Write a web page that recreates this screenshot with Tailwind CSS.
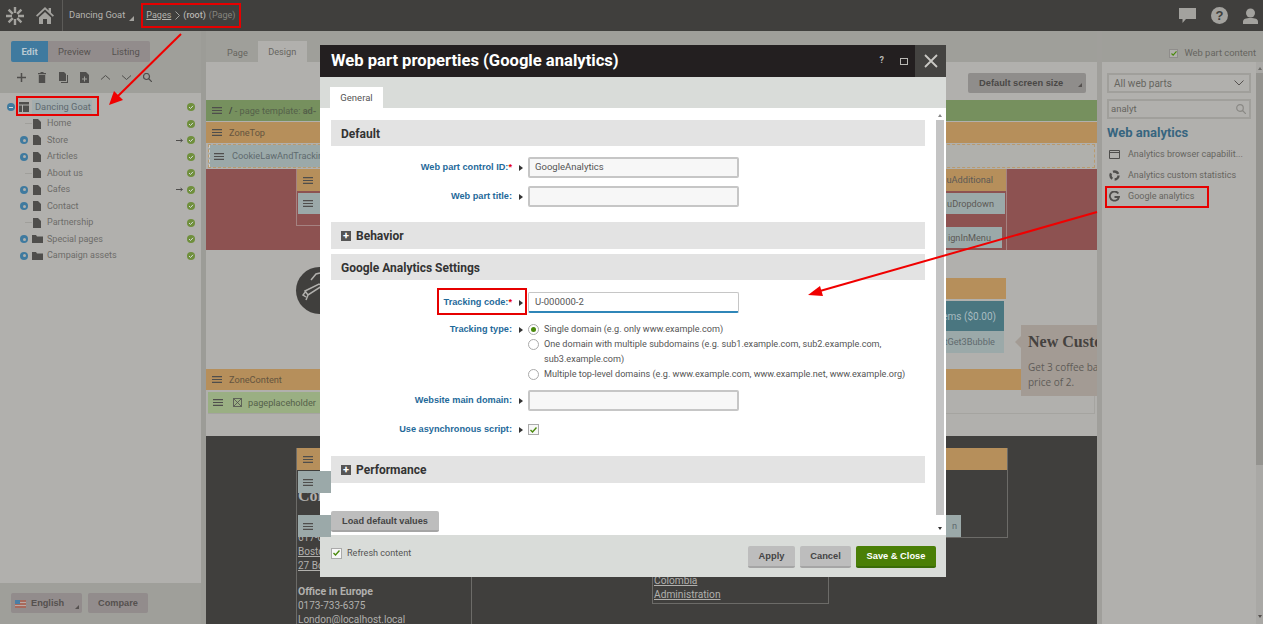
<!DOCTYPE html>
<html lang="en">
<head>
    <meta charset="UTF-8">
    <title>Web part properties</title>
    <script src="https://cdn.jsdelivr.net/npm/@tailwindcss/browser@4"></script>
</head>
<body class="bg-[#9f9f9a]">
<div class="relative w-[1263px] h-[624px] overflow-hidden font-['Roboto',sans-serif] text-[#4f4e4c] text-[9.200px]">

    <!-- Top bar -->
    <header class="h-[31px] bg-[#403f3d] flex items-center text-[#b5b4b0] text-[9px]">
        <svg class="ml-[5px] w-[20px] h-[20px]" viewBox="0 0 20 20" fill="none" stroke="#a3a29e" stroke-width="2.400"><path d="M10 1v6M10 13v6M1 10h6M13 10h6M3.600 3.600l4.200 4.200M12.200 12.200l4.200 4.200M16.400 3.600l-4.200 4.200M7.800 12.200l-4.200 4.200"/></svg>
        <svg class="ml-[11px] w-[18px] h-[17px]" viewBox="0 0 18 17" fill="#a3a29e"><path d="M9 0L0 8.500l1.200 1.200L9 2.600l7.800 7.100L18 8.500l-3-2.800V1h-2.400v2.500z"/><path d="M3 10.500L9 5l6 5.500V17h-4v-5H7v5H3z"/></svg>
        <div class="ml-[8px] w-px h-[31px] bg-[#5c5b58]"></div>
        <span class="ml-[6px] text-[9.400px]">Dancing Goat</span>
        <span class="ml-[4px] mt-[5px] w-0 h-0 border-l-[5px] border-l-transparent border-b-[5px] border-b-[#a3a29e]"></span>
        <span class="ml-[12px] underline">Pages</span>
        <svg class="ml-[4px] w-[5px] h-[9px]" viewBox="0 0 5 9" fill="none" stroke="#a3a29e"><path d="M.5.500l4 4-4 4"/></svg>
        <span class="ml-[3px] font-medium">(root)</span>
        <span class="ml-[3px] text-[#86857f]">(Page)</span>
        <div class="ml-auto flex items-center gap-[15px] pr-[5px]">
            <svg class="w-[17px] h-[15px]" viewBox="0 0 17 15" fill="#a3a29e"><path d="M0 0h17v11H7l-3.500 4v-4H0z"/></svg>
            <svg class="w-[17px] h-[17px]" viewBox="0 0 17 17"><circle cx="8.500" cy="8.500" r="8.500" fill="#a3a29e"/><text x="8.500" y="13" text-anchor="middle" font-size="13" font-weight="700" fill="#403f3d" font-family="Liberation Sans">?</text></svg>
            <svg class="w-[15px] h-[16px]" viewBox="0 0 15 16" fill="#a3a29e"><circle cx="7.500" cy="5" r="4.500"/><path d="M0 16v-2.500C0 11 3 10 7.500 10s7.500 1 7.500 3.500V16z"/></svg>
        </div>
    </header>

    <div class="flex h-[593px]">
        <!-- Left column -->
        <aside class="w-[201px] shrink-0 flex flex-col">
            <div class="h-[62px] pt-[10px] pl-[11px]">
                <div class="flex h-[21px] w-[139px] rounded-[2px] overflow-hidden text-[9.400px]">
                    <span class="w-[37px] pt-px bg-[#3f7a9f] text-[#b9c9d2] font-bold flex items-center justify-center">Edit</span>
                    <span class="flex-1 pt-px bg-[#928c8c] text-[#55514f] flex items-center pl-[10px] gap-[21px]"><span>Preview</span><span>Listing</span></span>
                </div>
                <div class="flex items-center mt-[10px] ml-[6px] h-[11px]">
                    <svg class="w-[9px] h-[9px]" viewBox="0 0 9 9" fill="none" stroke="#4f4e4c" stroke-width="1.500"><path d="M4.500 0v9M0 4.500h9"/></svg>
                    <svg class="ml-[12px] w-[8px] h-[11px]" viewBox="0 0 8 11" fill="#4f4e4c"><path d="M0 1h8v1.200H0zM2.500 0h3v1h-3zM.8 3h6.400v8H.8z"/></svg>
                    <svg class="ml-[13px] w-[9px] h-[11px]" viewBox="0 0 9 11" fill="#4f4e4c"><path d="M0 0h5l2 2v7H0z"/><path d="M8 3h1v8H2v-1h6z"/></svg>
                    <svg class="ml-[12px] w-[9px] h-[11px]" viewBox="0 0 9 11" fill="#4f4e4c"><path d="M0 0h6l3 3v8H0z"/><path d="M2 7h5M4.500 4.500v5" stroke="#9f9f9a"/></svg>
                    <svg class="ml-[12px] w-[9px] h-[5px]" viewBox="0 0 9 5" fill="none" stroke="#4f4e4c"><path d="M0 4.500l4.500-4 4.500 4"/></svg>
                    <svg class="ml-[12px] w-[9px] h-[5px]" viewBox="0 0 9 5" fill="none" stroke="#4f4e4c"><path d="M0 .5l4.500 4 4.500-4"/></svg>
                    <svg class="ml-[12px] w-[9px] h-[9px]" viewBox="0 0 9 9" fill="none" stroke="#4f4e4c" stroke-width="1.200"><circle cx="3.500" cy="3.500" r="3"/><path d="M5.500 5.500L9 9"/></svg>
                </div>
            </div>
            <!-- Tree -->
            <div class="h-[490px] bg-[#b1b0ad] pt-[6px] text-[9px] text-[#6d6c69]">
                <div class="flex items-center h-[16.500px] pl-[7px] pr-[6px]">
                    <span class="w-[8px] h-[8px] rounded-full bg-[#3f7a9f] flex items-center justify-center"><span class="w-[4px] h-px bg-[#d5dadc]"></span></span>
                    <svg class="ml-[4px] w-[10px] h-[10px]" viewBox="0 0 10 10" fill="#4f4e4c"><path d="M0 0h10v2.500H0zM0 3.500h3V10H0zM4 3.500h6V10H4z"/></svg>
                    <span class="ml-[3px] w-[60px] pl-[3px] bg-[#a3adae] text-[#5f6a6e] text-[9.300px]">Dancing Goat</span>
                    <svg class="ml-auto w-[8px] h-[8px]" viewBox="0 0 8 8"><circle cx="4" cy="4" r="4" fill="#6f8f3c"/><path d="M2 4l1.500 1.500L6 2.800" fill="none" stroke="#d5dadc"/></svg>
                </div>
                <div class="flex items-center h-[16.500px] pl-[25px] pr-[6px]">
                    <span class="w-[7px] h-px bg-[#a09f9b] mr-px"></span>
                    <svg class="w-[8px] h-[10px]" viewBox="0 0 8 10" fill="#4f4e4c"><path d="M0 0h5l3 3v7H0z"/></svg>
                    <span class="ml-[6px]">Home</span>
                    <svg class="ml-auto w-[8px] h-[8px]" viewBox="0 0 8 8"><circle cx="4" cy="4" r="4" fill="#6f8f3c"/><path d="M2 4l1.500 1.500L6 2.800" fill="none" stroke="#d5dadc"/></svg>
                </div>
                <div class="flex items-center h-[16.500px] pl-[20px] pr-[6px]">
                    <span class="w-[8px] h-[8px] rounded-full bg-[#3f7a9f] mr-[5px] flex items-center justify-center"><span class="w-[3px] h-[3px] rounded-full bg-[#b1b0ad]"></span></span>
                    <svg class="w-[8px] h-[10px]" viewBox="0 0 8 10" fill="#4f4e4c"><path d="M0 0h5l3 3v7H0z"/></svg>
                    <span class="ml-[6px]">Store</span>
                    <svg class="ml-auto mr-[4px] w-[7px] h-[5px]" viewBox="0 0 7 5" fill="none" stroke="#4f4e4c"><path d="M0 2.500h6M4.500 1L6.500 2.500 4.500 4"/></svg>
                    <svg class="w-[8px] h-[8px]" viewBox="0 0 8 8"><circle cx="4" cy="4" r="4" fill="#6f8f3c"/><path d="M2 4l1.500 1.500L6 2.800" fill="none" stroke="#d5dadc"/></svg>
                </div>
                <div class="flex items-center h-[16.500px] pl-[20px] pr-[6px]">
                    <span class="w-[8px] h-[8px] rounded-full bg-[#3f7a9f] mr-[5px] flex items-center justify-center"><span class="w-[3px] h-[3px] rounded-full bg-[#b1b0ad]"></span></span>
                    <svg class="w-[8px] h-[10px]" viewBox="0 0 8 10" fill="#4f4e4c"><path d="M0 0h5l3 3v7H0z"/></svg>
                    <span class="ml-[6px]">Articles</span>
                    <svg class="ml-auto w-[8px] h-[8px]" viewBox="0 0 8 8"><circle cx="4" cy="4" r="4" fill="#6f8f3c"/><path d="M2 4l1.500 1.500L6 2.800" fill="none" stroke="#d5dadc"/></svg>
                </div>
                <div class="flex items-center h-[16.500px] pl-[25px] pr-[6px]">
                    <span class="w-[7px] h-px bg-[#a09f9b] mr-px"></span>
                    <svg class="w-[8px] h-[10px]" viewBox="0 0 8 10" fill="#4f4e4c"><path d="M0 0h5l3 3v7H0z"/></svg>
                    <span class="ml-[6px]">About us</span>
                    <svg class="ml-auto w-[8px] h-[8px]" viewBox="0 0 8 8"><circle cx="4" cy="4" r="4" fill="#6f8f3c"/><path d="M2 4l1.500 1.500L6 2.800" fill="none" stroke="#d5dadc"/></svg>
                </div>
                <div class="flex items-center h-[16.500px] pl-[20px] pr-[6px]">
                    <span class="w-[8px] h-[8px] rounded-full bg-[#3f7a9f] mr-[5px] flex items-center justify-center"><span class="w-[3px] h-[3px] rounded-full bg-[#b1b0ad]"></span></span>
                    <svg class="w-[8px] h-[10px]" viewBox="0 0 8 10" fill="#4f4e4c"><path d="M0 0h5l3 3v7H0z"/></svg>
                    <span class="ml-[6px]">Cafes</span>
                    <svg class="ml-auto mr-[4px] w-[7px] h-[5px]" viewBox="0 0 7 5" fill="none" stroke="#4f4e4c"><path d="M0 2.500h6M4.500 1L6.500 2.500 4.500 4"/></svg>
                    <svg class="w-[8px] h-[8px]" viewBox="0 0 8 8"><circle cx="4" cy="4" r="4" fill="#6f8f3c"/><path d="M2 4l1.500 1.500L6 2.800" fill="none" stroke="#d5dadc"/></svg>
                </div>
                <div class="flex items-center h-[16.500px] pl-[20px] pr-[6px]">
                    <span class="w-[8px] h-[8px] rounded-full bg-[#3f7a9f] mr-[5px] flex items-center justify-center"><span class="w-[3px] h-[3px] rounded-full bg-[#b1b0ad]"></span></span>
                    <svg class="w-[8px] h-[10px]" viewBox="0 0 8 10" fill="#4f4e4c"><path d="M0 0h5l3 3v7H0z"/></svg>
                    <span class="ml-[6px]">Contact</span>
                    <svg class="ml-auto w-[8px] h-[8px]" viewBox="0 0 8 8"><circle cx="4" cy="4" r="4" fill="#6f8f3c"/><path d="M2 4l1.500 1.500L6 2.800" fill="none" stroke="#d5dadc"/></svg>
                </div>
                <div class="flex items-center h-[16.500px] pl-[25px] pr-[6px]">
                    <span class="w-[7px] h-px bg-[#a09f9b] mr-px"></span>
                    <svg class="w-[8px] h-[10px]" viewBox="0 0 8 10" fill="#4f4e4c"><path d="M0 0h5l3 3v7H0z"/></svg>
                    <span class="ml-[6px]">Partnership</span>
                    <svg class="ml-auto w-[8px] h-[8px]" viewBox="0 0 8 8"><circle cx="4" cy="4" r="4" fill="#6f8f3c"/><path d="M2 4l1.500 1.500L6 2.800" fill="none" stroke="#d5dadc"/></svg>
                </div>
                <div class="flex items-center h-[16.500px] pl-[20px] pr-[6px]">
                    <span class="w-[8px] h-[8px] rounded-full bg-[#3f7a9f] mr-[4px] flex items-center justify-center"><span class="w-[3px] h-[3px] rounded-full bg-[#b1b0ad]"></span></span>
                    <svg class="w-[11px] h-[8px]" viewBox="0 0 11 8" fill="#4f4e4c"><path d="M0 0h4l1 1.500h6V8H0z"/></svg>
                    <span class="ml-[4px]">Special pages</span>
                    <svg class="ml-auto w-[8px] h-[8px]" viewBox="0 0 8 8"><circle cx="4" cy="4" r="4" fill="#6f8f3c"/><path d="M2 4l1.500 1.500L6 2.800" fill="none" stroke="#d5dadc"/></svg>
                </div>
                <div class="flex items-center h-[16.500px] pl-[20px] pr-[6px]">
                    <span class="w-[8px] h-[8px] rounded-full bg-[#3f7a9f] mr-[4px] flex items-center justify-center"><span class="w-[3px] h-[3px] rounded-full bg-[#b1b0ad]"></span></span>
                    <svg class="w-[11px] h-[8px]" viewBox="0 0 11 8" fill="#4f4e4c"><path d="M0 0h4l1 1.500h6V8H0z"/></svg>
                    <span class="ml-[4px]">Campaign assets</span>
                    <svg class="ml-auto w-[8px] h-[8px]" viewBox="0 0 8 8"><circle cx="4" cy="4" r="4" fill="#6f8f3c"/><path d="M2 4l1.500 1.500L6 2.800" fill="none" stroke="#d5dadc"/></svg>
                </div>
            </div>
            <div class="flex-1 flex items-start pt-[10px] pl-[11px] gap-[6px] font-['Liberation_Sans',sans-serif] font-bold text-[#55514f] text-[9.200px]">
                <span class="relative w-[71px] h-[20px] pt-px bg-[#928c8c] rounded-[2px] flex items-center pl-[4px]">
                    <svg class="w-[11px] h-[8px] mr-[5px]" viewBox="0 0 11 8"><path d="M0 0h11v8H0z" fill="#a86a5c"/><path d="M0 0h5v4H0z" fill="#4a7ea5"/><path d="M5 2.500h6M0 5.500h11" stroke="#b9a9a5"/></svg>English
                    <span class="absolute right-[3px] bottom-[4px] w-0 h-0 border-l-[4px] border-l-transparent border-b-[4px] border-b-[#55514f]"></span>
                </span>
                <span class="w-[60px] h-[20px] pt-px bg-[#928c8c] rounded-[2px] flex items-center justify-center">Compare</span>
            </div>
        </aside>

        <div class="w-[5px] bg-[#9c9c97]"></div>

        <!-- Design area -->
        <main class="relative w-[891px] shrink-0">
            <div class="h-[31px] pl-[21px] pt-[10px] flex text-[9.200px] text-[#66655f]">
                <span class="mt-[5px]">Page</span>
                <span class="ml-[10px] w-[49px] h-[21px] pt-px bg-[#b1b0ad] flex items-center justify-center">Design</span>
            </div>
            <div class="h-[562px] bg-[#b1b0ad]">
                <div class="h-[38px] flex items-start justify-end pr-[11px] pt-[11px]">
                    <span class="relative w-[118px] h-[20px] pt-px bg-[#8f8d8b] rounded-[2px] flex items-center pl-[11px] font-['Liberation_Sans',sans-serif] font-bold text-[#4a4846] text-[9.300px]">Default screen size
                        <span class="absolute right-[4px] bottom-[6px] w-0 h-0 border-l-[4px] border-l-transparent border-b-[4px] border-b-[#55514f]"></span>
                    </span>
                </div>
                <div class="h-[21px] bg-[#76905e] flex items-center pl-[6px] gap-[7px] text-[#55614a]">
                    <svg class="w-[10px] h-[7px]" viewBox="0 0 10 7" fill="#4f4e4c"><path d="M0 0h10v1.200H0zM0 2.900h10v1.200H0zM0 5.800h10V7H0z"/></svg>
                    <span><b class="text-[#44463e]">/</b> - page template: <b>ad-</b></span>
                </div>
                <div class="mt-px h-[21px] bg-[#b68f5b] flex items-center pl-[6px] gap-[7px] text-[#65553f]">
                    <svg class="w-[10px] h-[7px]" viewBox="0 0 10 7" fill="#4f4e4c"><path d="M0 0h10v1.200H0zM0 2.900h10v1.200H0zM0 5.800h10V7H0z"/></svg>ZoneTop
                </div>
                <div class="mt-[1px] mx-[2px] h-[24px] border border-dashed border-[#b99a6d] bg-[#b0b0ac] flex items-center text-[#5f6a6e]">
                    <div class="w-[135px] h-full bg-[#9ba9a9] border-l border-dashed border-[#d0d0cc] flex items-center pl-[4px] gap-[8px] whitespace-nowrap">
                        <svg class="w-[10px] h-[7px] shrink-0" viewBox="0 0 10 7" fill="#4f4e4c"><path d="M0 0h10v1.200H0zM0 2.900h10v1.200H0zM0 5.800h10V7H0z"/></svg>CookieLawAndTracking
                    </div>
                </div>
                <div class="mt-[1px] h-[81px] bg-[#8d5251] flex justify-between pl-[90px] pr-[90px] text-[#5d5a56]">
                    <div class="w-[60px] h-[57px] border border-[#a58281] border-t-0">
                        <div class="h-[22px] bg-[#b68f5b] flex items-center pl-[6px]"><svg class="w-[10px] h-[7px]" viewBox="0 0 10 7" fill="#4f4e4c"><path d="M0 0h10v1.200H0zM0 2.900h10v1.200H0zM0 5.800h10V7H0z"/></svg></div>
                        <div class="mt-[2px] mx-[1px] h-[21px] bg-[#9ba9a9] flex items-center pl-[5px]"><svg class="w-[10px] h-[7px]" viewBox="0 0 10 7" fill="#4f4e4c"><path d="M0 0h10v1.200H0zM0 2.900h10v1.200H0zM0 5.800h10V7H0z"/></svg></div>
                    </div>
                    <div class="w-[67px] h-[81px] flex flex-col border-r border-[#a58281] whitespace-nowrap">
                        <div class="h-[22px] bg-[#b68f5b] flex items-center justify-end pr-[13px]">uAdditional</div>
                        <div class="mt-[2px] w-[65px] h-[21px] bg-[#9ba9a9] flex items-center justify-end pr-[11px]">uDropdown</div>
                        <div class="mt-[13px] w-[62px] h-[21px] bg-[#9ba9a9] flex items-center justify-end pr-[11px]">ignInMenu</div>
                    </div>
                </div>
                <div class="h-[119px] flex justify-between pl-[90px] pr-[91px]">
                    <div class="mt-[17px] w-[47px] h-[47px] rounded-full bg-[#403f3d]">
                        <svg class="w-[47px] h-[47px]" viewBox="0 0 47 47" fill="none" stroke="#b1b0ad" stroke-width="1.500"><path d="M15 13l5-6 4-1M9 24l14-7 3 2-14 9zM10 24l-3 4 3 2M12 28l-2 5"/></svg>
                    </div>
                    <div class="mt-[28px] w-[60px]">
                        <div class="h-[21px] bg-[#b68f5b]"></div>
                        <div class="mt-[2px] mr-[2px] h-[30px] bg-[#4a7680] flex items-center justify-end pr-[8px] text-[#a9bcc0] text-[10px] whitespace-nowrap">ems ($0.00)</div>
                        <div class="mr-[2px] h-[22px] bg-[#9ba9a9] flex items-center justify-end pr-[9px] text-[#5f6a6e] whitespace-nowrap">tGet3Bubble</div>
                    </div>
                </div>
                <div class="h-[21px] bg-[#b68f5b] flex items-center pl-[6px] gap-[7px] text-[#65553f]">
                    <svg class="w-[10px] h-[7px]" viewBox="0 0 10 7" fill="#4f4e4c"><path d="M0 0h10v1.200H0zM0 2.900h10v1.200H0zM0 5.800h10V7H0z"/></svg>ZoneContent
                </div>
                <div class="mt-[2px] ml-[2px] h-[22px] border-r border-b border-[#a5a4a0] mr-[2px]">
                    <div class="w-[125px] h-[21px] bg-[#9aaf83] flex items-center pl-[5px] text-[#55614a] whitespace-nowrap">
                        <svg class="w-[10px] h-[7px] mr-[10px] shrink-0" viewBox="0 0 10 7" fill="#4f4e4c"><path d="M0 0h10v1.200H0zM0 2.900h10v1.200H0zM0 5.800h10V7H0z"/></svg>
                        <svg class="w-[9px] h-[9px] mr-[6px] shrink-0" viewBox="0 0 9 9" fill="none" stroke="#4f4e4c" stroke-width=".8"><path d="M.5.5h8v8h-8zM.5.5l8 8M8.500.5l-8 8"/></svg>pageplaceholder
                    </div>
                </div>
                <!-- Footer of the edited page -->
                <div class="mt-[22px] h-[188px] bg-[#403f3d] flex pl-[90px] pt-[12px] text-[#b1b0ad]">
                    <div class="w-[176px] h-[176px] border-l border-r border-[#6c6b68]">
                        <div class="h-[22px] w-[35px] bg-[#b68f5b] flex items-center pl-[6px]"><svg class="w-[10px] h-[7px]" viewBox="0 0 10 7" fill="#4f4e4c"><path d="M0 0h10v1.200H0zM0 2.900h10v1.200H0zM0 5.800h10V7H0z"/></svg></div>
                        <div class="relative z-10 mt-px ml-[1px] h-[22px] w-[33px] bg-[#9ba9a9] flex items-center pl-[5px]"><svg class="w-[10px] h-[7px]" viewBox="0 0 10 7" fill="#4f4e4c"><path d="M0 0h10v1.200H0zM0 2.900h10v1.200H0zM0 5.800h10V7H0z"/></svg></div>
                        <div class="-mt-[8px] pl-px font-['Liberation_Serif',serif] font-bold text-[16px] leading-[22px]">Con</div>
                        <div class="relative z-10 mt-[8px] ml-[1px] h-[22px] w-[33px] bg-[#9ba9a9] flex items-center pl-[5px]"><svg class="w-[10px] h-[7px]" viewBox="0 0 10 7" fill="#4f4e4c"><path d="M0 0h10v1.200H0zM0 2.900h10v1.200H0zM0 5.800h10V7H0z"/></svg></div>
                        <div class="-mt-[6px] pl-px text-[10px] leading-[14px]">617-000-0000<br><u>Boston</u><br><u>27 Boylston</u></div>
                        <div class="pl-px mt-[12px] text-[10px] leading-[14px] whitespace-nowrap"><b class="text-[10.500px]">Office in Europe</b><br>0173-733-6375<br>London@localhost.local</div>
                    </div>
                    <div class="ml-[180px] -mt-[12px] pt-[138px] w-[177px] h-[168px] border-l border-r border-b border-[#6c6b68] pl-px text-[10.200px] leading-[14px]">
                        <u>Colombia</u><br><u>Administration</u>
                    </div>
                    <div class="ml-[59px] w-[120px] h-[90px] border-r border-b border-[#6c6b68] flex flex-col">
                        <div class="h-[22px] bg-[#b68f5b]"></div>
                        <div class="mt-[45px] w-[73px] h-[22px] bg-[#9ba9a9] flex items-center justify-end pr-[4px] text-[#5f6a6e]">n</div>
                    </div>
                </div>
            </div>
            <!-- Promo bubble overlapping the zones -->
            <div class="absolute left-[815px] top-[294px] w-[76px] h-[71px] bg-[#a39b94] overflow-hidden pl-[7px] pt-[7px] text-[#5f5c58] font-['Open_Sans',sans-serif] text-[10px] leading-[14.500px] whitespace-nowrap">
                <div class="font-['Liberation_Serif',serif] font-bold text-[16px] leading-[20px] mb-[8px] text-[#45423f]">New Customers</div>
                Get 3 coffee bags<br>price of 2.
            </div>
            <span class="absolute left-[809px] top-[305px] w-0 h-0 border-y-[6px] border-y-transparent border-r-[6px] border-r-[#a39b94]"></span>
        </main>

        <!-- Right column -->
        <div class="w-[5px] bg-[#a09f9b]"></div>
        <aside class="w-[161px] shrink-0 flex flex-col">
            <div class="h-[31px] flex items-center justify-end pr-[7px] pt-[13px] text-[#66655f] text-[9.400px]">
                <span class="w-[9px] h-[9px] mr-[6px] bg-[#b1b0ad] border border-[#8f8d8b] flex items-center justify-center">
                    <svg class="w-[6px] h-[5px]" viewBox="0 0 7 6" fill="none" stroke="#4a8a0c" stroke-width="1.400"><path d="M.5 3l2 2L6.500.5"/></svg>
                </span>Web part content
            </div>
            <div class="flex-1 flex">
                <div class="w-[154px] bg-[#b1b0ad] px-[5px] pt-[11px] text-[9px] text-[#66655f]">
                    <div class="h-[20px] border-2 border-[#a09f9b] flex items-center justify-between px-[5px] text-[10px]">All web parts
                        <svg class="w-[10px] h-[6px]" viewBox="0 0 10 6" fill="none" stroke="#55514f"><path d="M.5.5L5 5 9.500.5"/></svg>
                    </div>
                    <div class="mt-[6px] h-[20px] border-2 border-[#a09f9b] flex items-center justify-between pl-[2px] pr-[3px] text-[9.500px]">analyt
                        <svg class="w-[10px] h-[10px]" viewBox="0 0 10 10" fill="none" stroke="#8a8985" stroke-width="1.200"><circle cx="4" cy="4" r="3.300"/><path d="M6.500 6.500L10 10"/></svg>
                    </div>
                    <h2 class="mt-[6px] text-[13px] leading-[16px] font-bold text-[#37657f]">Web analytics</h2>
                    <div class="mt-[3px] h-[21px] flex items-center gap-[8px] pl-[2px] whitespace-nowrap">
                        <svg class="w-[11px] h-[9px] shrink-0" viewBox="0 0 11 9" fill="none" stroke="#4f4e4c"><path d="M.5.5h10v8H.5zM.5 2.500h10"/></svg>Analytics browser capabilit...
                    </div>
                    <div class="h-[21px] flex items-center gap-[8px] pl-[2px] whitespace-nowrap">
                        <svg class="w-[11px] h-[11px] shrink-0" viewBox="0 0 11 11" fill="none" stroke="#4f4e4c" stroke-width="2.400" stroke-dasharray="6 2.400"><circle cx="5.500" cy="5.500" r="4"/></svg>Analytics custom statistics
                    </div>
                    <div class="h-[21px] flex items-center gap-[8px] pl-[2px] whitespace-nowrap">
                        <svg class="w-[11px] h-[11px] shrink-0" viewBox="0 0 11 11" fill="none" stroke="#4f4e4c" stroke-width="1.800"><path d="M9.300 2.500A4.600 4.600 0 1 0 10 6H5.500"/></svg>Google analytics
                    </div>
                </div>
                <div class="w-[7px] flex flex-col items-center bg-[#a9a8a5]">
                    <span class="mt-[5px] mb-[3px] w-0 h-0 border-x-[2.500px] border-x-transparent border-b-[3px] border-b-[#6d6c69]"></span>
                    <div class="h-[392px] w-[7px] bg-[#94938f]"></div>
                    <span class="mt-[150px] w-0 h-0 border-x-[2.500px] border-x-transparent border-t-[3px] border-t-[#55514f]"></span>
                </div>
            </div>
        </aside>
    </div>

    <!-- Modal dialog -->
    <div class="absolute left-[320px] top-[45px] w-[626px] h-[532px] flex flex-col bg-white">
        <div class="h-[32px] bg-[#231f20] flex items-center pl-[11px] text-white">
            <h1 class="text-[16.600px] font-bold">Web part properties (Google analytics)</h1>
            <span class="ml-auto mr-[16px] text-[#b9b8b4] text-[9px] font-bold">?</span>
            <span class="mr-[7px] w-[8px] h-[7px] border border-[#b9b8b4]"></span>
            <span class="w-[31px] h-[32px] bg-[#444341] flex items-center justify-center">
                <svg class="w-[14px] h-[14px]" viewBox="0 0 14 14" fill="none" stroke="#c9c8c4" stroke-width="1.800"><path d="M1 1l12 12M13 1L1 13"/></svg>
            </span>
        </div>
        <div class="h-[31px] bg-[#d9dcd9] pl-[10px] pt-[10px] flex">
            <span class="w-[53px] h-[21px] pt-px bg-white flex items-center justify-center text-[9.500px] text-[#555]">General</span>
        </div>
        <div class="relative flex-1 min-h-0 pl-[11px] pr-[21px] pt-[12px] text-[#555] text-[9.100px]">
            <div class="h-[26px] pt-px bg-[#e3e3e3] flex items-center pl-[10px] text-[12px] font-bold text-[#333]">Default</div>
            <div class="mt-[11px] h-[21px] flex items-center">
                <label class="w-[181px] text-right text-[#1f6a9a] font-bold text-[9.200px] font-['Liberation_Sans',sans-serif]">Web part control ID:<span class="text-red-600">*</span></label>
                <span class="ml-[7px] w-0 h-0 border-y-[3.500px] border-y-transparent border-l-[4px] border-l-[#333]"></span>
                <span class="ml-[5px] w-[211px] h-[21px] border-2 border-[#c6c6c6] rounded-[2px] bg-[#f7f7f7] flex items-center pl-[5px] text-[9.500px]">GoogleAnalytics</span>
            </div>
            <div class="mt-[8px] h-[21px] flex items-center">
                <label class="w-[181px] text-right text-[#1f6a9a] font-bold text-[9.200px] font-['Liberation_Sans',sans-serif]">Web part title:</label>
                <span class="ml-[7px] w-0 h-0 border-y-[3.500px] border-y-transparent border-l-[4px] border-l-[#333]"></span>
                <span class="ml-[5px] w-[211px] h-[21px] border-2 border-[#c6c6c6] rounded-[2px] bg-[#f7f7f7]"></span>
            </div>
            <div class="mt-[15px] h-[27px] bg-[#e3e3e3] flex items-center pl-[10px] text-[12px] font-bold text-[#333]">
                <span class="mr-[5px] w-[10px] h-[10px] bg-[#555] text-white text-[11px] leading-[9px] text-center">+</span>Behavior
            </div>
            <div class="mt-[5px] h-[26px] pt-px bg-[#e3e3e3] flex items-center pl-[10px] text-[12px] font-bold text-[#333]">Google Analytics Settings</div>
            <div class="mt-[12px] h-[21px] flex items-center">
                <label class="w-[181px] text-right text-[#1f6a9a] font-bold text-[9.200px] font-['Liberation_Sans',sans-serif]">Tracking code:<span class="text-red-600">*</span></label>
                <span class="ml-[7px] w-0 h-0 border-y-[3.500px] border-y-transparent border-l-[4px] border-l-[#333]"></span>
                <span class="ml-[5px] w-[211px] h-[21px] border border-[#c6c6c6] border-b-2 border-b-[#2f86b8] rounded-[2px] flex items-center pl-[6px] text-[9.500px]">U-000000-2</span>
            </div>
            <div class="mt-[9px] flex items-start">
                <label class="w-[181px] text-right text-[#1f6a9a] font-bold text-[9.200px] font-['Liberation_Sans',sans-serif] leading-[15px]">Tracking type:</label>
                <span class="ml-[7px] mt-[5px] w-0 h-0 border-y-[3.500px] border-y-transparent border-l-[4px] border-l-[#333]"></span>
                <div class="ml-[5px] leading-[15px]">
                    <div class="flex items-center"><span class="mr-[5px] w-[11px] h-[11px] rounded-full border border-[#aaa] flex items-center justify-center shrink-0"><span class="w-[5px] h-[5px] rounded-full bg-[#4a8a0c]"></span></span>Single domain (e.g. only www.example.com)</div>
                    <div class="flex"><span class="mt-[2px] mr-[5px] w-[11px] h-[11px] rounded-full border border-[#aaa] shrink-0"></span><span class="w-[362px]">One domain with multiple subdomains (e.g. sub1.example.com, sub2.example.com, sub3.example.com)</span></div>
                    <div class="flex items-center whitespace-nowrap"><span class="mr-[5px] w-[11px] h-[11px] rounded-full border border-[#aaa] shrink-0"></span>Multiple top-level domains (e.g. www.example.com, www.example.net, www.example.org)</div>
                </div>
            </div>
            <div class="mt-[8px] h-[21px] flex items-center">
                <label class="w-[181px] text-right text-[#1f6a9a] font-bold text-[9.200px] font-['Liberation_Sans',sans-serif]">Website main domain:</label>
                <span class="ml-[7px] w-0 h-0 border-y-[3.500px] border-y-transparent border-l-[4px] border-l-[#333]"></span>
                <span class="ml-[5px] w-[211px] h-[21px] border-2 border-[#c6c6c6] rounded-[2px] bg-[#f7f7f7]"></span>
            </div>
            <div class="mt-[8px] h-[21px] flex items-center">
                <label class="w-[181px] text-right text-[#1f6a9a] font-bold text-[9.200px] font-['Liberation_Sans',sans-serif]">Use asynchronous script:</label>
                <span class="ml-[7px] w-0 h-0 border-y-[3.500px] border-y-transparent border-l-[4px] border-l-[#333]"></span>
                <span class="ml-[5px] w-[11px] h-[11px] border border-[#aaa] bg-[#f7f7f7] flex items-center justify-center">
                    <svg class="w-[7px] h-[6px]" viewBox="0 0 7 6" fill="none" stroke="#4a8a0c" stroke-width="1.400"><path d="M.5 3l2 2L6.500.5"/></svg>
                </span>
            </div>
            <div class="mt-[16px] h-[27px] bg-[#e3e3e3] flex items-center pl-[10px] text-[12px] font-bold text-[#333]">
                <span class="mr-[5px] w-[10px] h-[10px] bg-[#555] text-white text-[11px] leading-[9px] text-center">+</span>Performance
            </div>
            <div class="mt-[28px] w-[108px] h-[21px] pt-[2px] bg-[#bdbdbd] border-b-2 border-[#a5a5a5] rounded-[2px] flex items-center justify-center font-['Liberation_Sans',sans-serif] font-bold text-[9.200px] text-[#444]">Load default values</div>
            <!-- Dialog scrollbar -->
            <div class="absolute right-[2px] top-0 bottom-0 w-[8px] flex flex-col items-center">
                <span class="mt-[6px] mb-[3px] w-0 h-0 border-x-[2.500px] border-x-transparent border-b-[3px] border-b-[#888]"></span>
                <div class="h-[395px] bg-[#c4c4c4] w-[8px]"></div>
                <span class="mt-[12px] w-0 h-0 border-x-[2.500px] border-x-transparent border-t-[3px] border-t-[#333]"></span>
            </div>
        </div>
        <div class="h-[42px] bg-[#d9dcd9] flex items-center pl-[11px] pr-[10px]">
            <span class="w-[11px] h-[11px] border border-[#aaa] bg-[#f7f7f7] flex items-center justify-center mb-[6px]">
                <svg class="w-[7px] h-[6px]" viewBox="0 0 7 6" fill="none" stroke="#4a8a0c" stroke-width="1.400"><path d="M.5 3l2 2L6.500.5"/></svg>
            </span>
            <span class="ml-[5px] mb-[4px] text-[9.100px] text-[#555]">Refresh content</span>
            <div class="ml-auto mt-[2px] flex gap-[5px] font-['Liberation_Sans',sans-serif] font-bold text-[9.300px]">
                <span class="w-[47px] h-[22px] pt-px bg-[#bdbdbd] border-b-2 border-[#a5a5a5] rounded-[2px] flex items-center justify-center text-[#444]">Apply</span>
                <span class="w-[51px] h-[22px] pt-px bg-[#bdbdbd] border-b-2 border-[#a5a5a5] rounded-[2px] flex items-center justify-center text-[#444]">Cancel</span>
                <span class="w-[80px] h-[22px] pt-px bg-[#4a7f06] border-b-2 border-[#3a6c08] rounded-[2px] flex items-center justify-center text-white">Save &amp; Close</span>
            </div>
        </div>
    </div>

    <!-- Red annotations -->
    <div class="absolute left-[141px] top-[3px] w-[100px] h-[25px] border-2 border-[#e60000]"></div>
    <div class="absolute left-[16px] top-[96px] w-[83px] h-[20px] border-2 border-[#e60000]"></div>
    <div class="absolute left-[437px] top-[288px] w-[90px] h-[27px] border-2 border-[#e60000]"></div>
    <div class="absolute left-[1105px] top-[186px] w-[104px] h-[22px] border-2 border-[#e60000]"></div>
    <svg class="absolute left-0 top-0 w-[1263px] h-[624px] pointer-events-none" viewBox="0 0 1263 624" fill="#f00000" stroke="none">
        <path d="M181 34L118 96" stroke="#f00000" stroke-width="2"/>
        <path d="M109 105l5-14 9 9z"/>
        <path d="M1097 212L820 291" stroke="#f00000" stroke-width="2"/>
        <path d="M808 295l12-9 3 10z"/>
    </svg>
</div>
</body>
</html>
